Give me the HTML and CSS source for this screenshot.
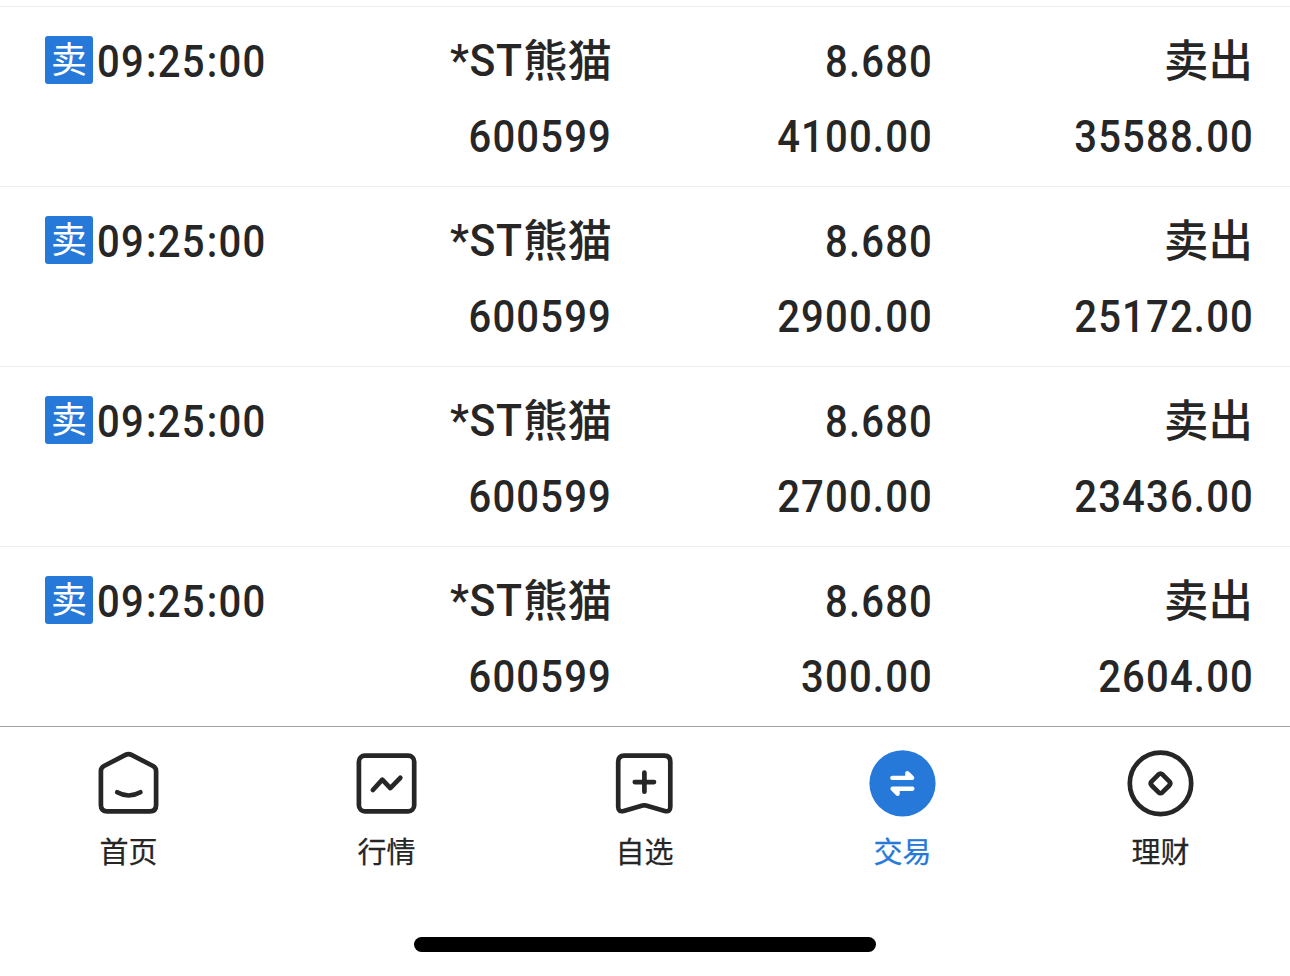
FILE: index.html
```html
<!DOCTYPE html>
<html lang="zh-CN">
<head>
<meta charset="utf-8">
<title>成交</title>
<link rel="stylesheet" href="styles.css">
</head>
<body>
<main class="trades">
  <section class="trade">
    <div class="cell time"><p class="line"><span class="badge">卖</span><span class="num clock">09<i class="colon">:</i>25<i class="colon">:</i>00</span></p></div>
    <div class="cell"><p class="line name"><span class="st">*ST</span>熊猫</p><p class="line num">600599</p></div>
    <div class="cell"><p class="line num">8.680</p><p class="line num">4100.00</p></div>
    <div class="cell"><p class="line side">卖出</p><p class="line num">35588.00</p></div>
  </section>
  <section class="trade">
    <div class="cell time"><p class="line"><span class="badge">卖</span><span class="num clock">09<i class="colon">:</i>25<i class="colon">:</i>00</span></p></div>
    <div class="cell"><p class="line name"><span class="st">*ST</span>熊猫</p><p class="line num">600599</p></div>
    <div class="cell"><p class="line num">8.680</p><p class="line num">2900.00</p></div>
    <div class="cell"><p class="line side">卖出</p><p class="line num">25172.00</p></div>
  </section>
  <section class="trade">
    <div class="cell time"><p class="line"><span class="badge">卖</span><span class="num clock">09<i class="colon">:</i>25<i class="colon">:</i>00</span></p></div>
    <div class="cell"><p class="line name"><span class="st">*ST</span>熊猫</p><p class="line num">600599</p></div>
    <div class="cell"><p class="line num">8.680</p><p class="line num">2700.00</p></div>
    <div class="cell"><p class="line side">卖出</p><p class="line num">23436.00</p></div>
  </section>
  <section class="trade">
    <div class="cell time"><p class="line"><span class="badge">卖</span><span class="num clock">09<i class="colon">:</i>25<i class="colon">:</i>00</span></p></div>
    <div class="cell"><p class="line name"><span class="st">*ST</span>熊猫</p><p class="line num">600599</p></div>
    <div class="cell"><p class="line num">8.680</p><p class="line num">300.00</p></div>
    <div class="cell"><p class="line side">卖出</p><p class="line num">2604.00</p></div>
  </section>
</main>
<nav class="tabs">
  <a class="tab">
    <svg class="icon" viewBox="0 0 72 72"><path d="M7.9 24Q7.9 20.6 11 19L32.5 7.8Q35.5 6.3 38.5 7.8L60 19Q63.1 20.6 63.1 24V58Q63.1 64.4 56.7 64.4H14.3Q7.9 64.4 7.9 58Z"/><path d="M24.2 45.3Q35.6 51.7 47.4 45.3"/></svg>
    <span class="label">首页</span>
  </a>
  <a class="tab">
    <svg class="icon" viewBox="0 0 72 72"><rect x="7.9" y="8.7" width="55.3" height="55.6" rx="6"/><path d="M21.9 43 31.3 32.7 39.3 41.1 49.3 30.8"/></svg>
    <span class="label">行情</span>
  </a>
  <a class="tab">
    <svg class="icon" viewBox="0 0 72 72"><path d="M15.2 8.7H55.3Q61.3 8.7 61.3 14.7V59.8Q61.3 65.4 55.8 63.9L37 58.6Q35.3 58.1 33.6 58.6L14.7 63.9Q9.2 65.4 9.2 59.8V14.7Q9.2 8.7 15.2 8.7Z"/><path d="M25.8 35.1H45M35.4 25.5V44.7"/></svg>
    <span class="label">自选</span>
  </a>
  <a class="tab active">
    <svg class="icon" viewBox="0 0 72 72"><circle class="disc" cx="35.5" cy="36.4" r="33.1"/><path class="arrow" d="M25.3 28.8H38.2V26Q38.2 23.9 40.3 23.9Q41.2 23.9 42 24.7L46.4 29Q47.6 30.2 47.2 31.5Q46.8 33.1 45 33.1H25.3A2.15 2.15 0 0 1 25.3 28.8ZM45.4 43.9H32.7V47Q32.7 49 30.7 49Q29.8 49 29 48.2L24.3 43.5Q23 42.2 23.5 41Q24 39.6 25.8 39.6H45.4A2.15 2.15 0 0 1 45.4 43.9Z"/></svg>
    <span class="label">交易</span>
  </a>
  <a class="tab">
    <svg class="icon" viewBox="0 0 72 72"><circle cx="35.5" cy="36.4" r="30.7"/><path d="M33.4 27.6Q35.5 25.7 37.6 27.6L44.3 34.3Q46.2 36.4 44.3 38.5L37.6 45.2Q35.5 47.1 33.4 45.2L26.7 38.5Q24.8 36.4 26.7 34.3Z"/></svg>
    <span class="label">理财</span>
  </a>
</nav>
<div class="home-indicator"></div>
</body>
</html>
```
FILE: styles.css
```css
* { box-sizing: border-box; }

body {
  margin: 0;
  height: 976px;
  overflow: hidden;
  display: flex;
  flex-direction: column;
  align-items: center;
  background: #fff;
  color: #262626;
  font-family: Roboto, "Noto Sans CJK SC", sans-serif;
}

.trades {
  width: 100%;
  padding-top: 6px;
}

.trade {
  display: grid;
  grid-template-columns: 266px 346px 321px 321px;
  height: 180px;
  padding: 17px 0 0;
  border-top: 1px solid #ededed;
}

.cell { text-align: right; }

.line {
  margin: 0;
  height: 75px;
  line-height: 75px;
  font-size: 45px;
  font-weight: 500;
  white-space: nowrap;
}

/* Condensed figures */
.num {
  letter-spacing: 1.3px;
  transform: scaleX(0.89);
  transform-origin: right center;
}

.name,
.side {
  font-size: 44.5px;
  line-height: 77px;
}

.side { padding-right: 1px; }

.st {
  display: inline-block;
  line-height: 74px;
  transform: translateY(-1px) scaleX(0.96);
  transform-origin: right center;
  letter-spacing: 0.6px;
}

.time .line {
  display: flex;
  align-items: center;
  padding-left: 45px;
}

.clock {
  margin-left: 3.5px;
  transform-origin: left center;
}

.colon {
  margin: 0 0.2px 0 1.2px;
  font-style: normal;
}

.badge {
  width: 48px;
  height: 48px;
  flex: none;
  margin-top: -3px;
  border-radius: 3px;
  background: #2679d8;
  color: #fff;
  font-size: 36px;
  font-weight: 400;
  line-height: 50px;
  text-align: center;
}

.tabs {
  width: 100%;
  height: 180px;
  display: grid;
  grid-template-columns: repeat(5, 1fr);
  border-top: 1px solid #a3a3a3;
}

.tab {
  display: flex;
  flex-direction: column;
  align-items: center;
  padding-top: 20px;
}

.icon {
  width: 72px;
  height: 72px;
  fill: none;
  stroke: #262626;
  stroke-width: 4.7;
  stroke-linecap: round;
  stroke-linejoin: round;
}

.icon .disc { fill: #2679d8; stroke: none; }
.icon .arrow { fill: #fff; stroke: none; }

.label {
  height: 44px;
  margin-top: 12px;
  margin-right: 1px;
  font-size: 29px;
  line-height: 44px;
  -webkit-text-stroke: 0.25px currentColor;
}

.active { color: #2679d8; }

.home-indicator {
  width: 462px;
  height: 15px;
  margin-top: 31px;
  border-radius: 8px;
  background: #000;
}
```
